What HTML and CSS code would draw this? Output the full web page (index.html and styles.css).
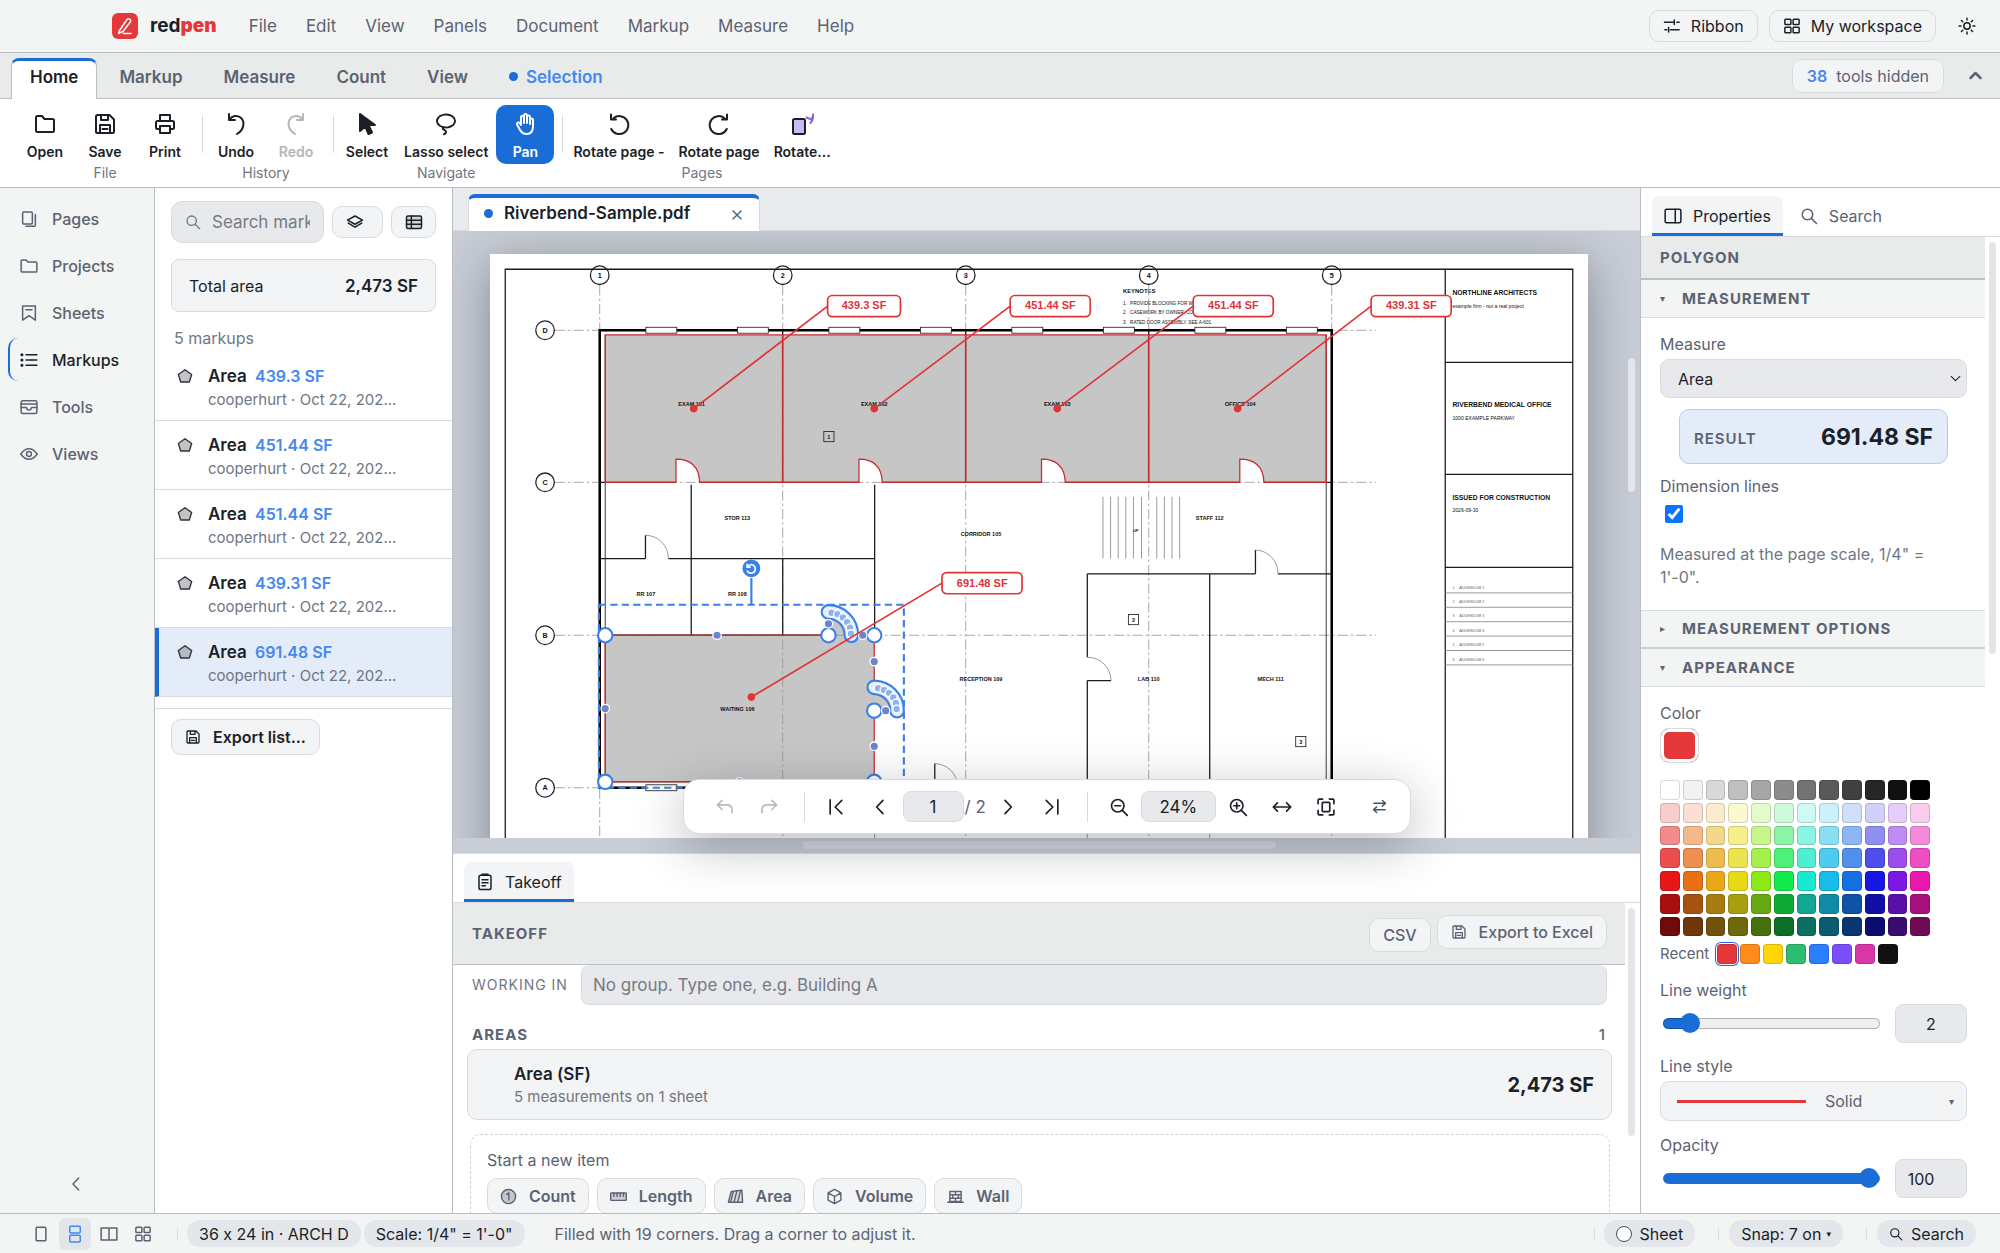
FILE: index.html
```html
<!DOCTYPE html>
<html lang="en">
<head>
<meta charset="utf-8">
<title>redpen</title>
<link rel="stylesheet" href="styles.css">
</head>
<body>
<svg class="sprite" aria-hidden="true">
  <symbol id="i-folder" viewBox="0 0 24 24"><path d="M3 19V5.5A1.5 1.5 0 0 1 4.500 4H9l2.500 3H19.500A1.500 1.500 0 0 1 21 8.500V18.500A1.500 1.500 0 0 1 19.500 20H4.500A1.500 1.500 0 0 1 3 18.500Z"/></symbol>
  <symbol id="i-save" viewBox="0 0 24 24"><path d="M4.500 3H16.500L21 7.500V19.500A1.500 1.500 0 0 1 19.500 21H4.500A1.500 1.500 0 0 1 3 19.500V4.500A1.500 1.500 0 0 1 4.500 3ZM7 21V13H17V21M8 3V8H15V3M9.500 17H14.500"/></symbol>
  <symbol id="i-print" viewBox="0 0 24 24"><path d="M7 9V3H17V9M7 17H4.500A1.500 1.500 0 0 1 3 15.500V10.500A1.500 1.500 0 0 1 4.500 9H19.500A1.500 1.500 0 0 1 21 10.500V15.500A1.500 1.500 0 0 1 19.500 17H17M7 14H17V21H7Z"/></symbol>
  <symbol id="i-undo" viewBox="0 0 24 24"><path d="M5 2V8H11M5 8C8 3.500 13 2.800 16.500 5.500C21.500 9.500 20 18 13 22"/></symbol>
  <symbol id="i-redo" viewBox="0 0 24 24"><path d="M19 2V8H13M19 8C16 3.500 11 2.800 7.500 5.500C2.500 9.500 4 18 11 22"/></symbol>
  <symbol id="i-cursor" viewBox="0 0 24 24"><path fill="currentColor" d="M5 2L20 13H13.500L17 20.500L13.500 22L10.300 14.600L5 19Z"/></symbol>
  <symbol id="i-lasso" viewBox="0 0 24 24"><ellipse cx="12" cy="9" rx="9" ry="6.500" stroke-dasharray="4.500 1.500"/><path d="M9 15.500C7.500 18 12.500 17.500 12 20C11.800 21.500 11 22 10 22.300"/></symbol>
  <symbol id="i-hand" viewBox="0 0 24 24"><path d="M8 12V5.200a1.500 1.500 0 0 1 3 0V11M11 10V3.500a1.500 1.500 0 0 1 3 0V11M14 10.500V5a1.500 1.500 0 0 1 3 0V12M17 12V8a1.500 1.500 0 0 1 3 0V14.500C20 19.500 17.500 22 13.500 22C9.500 22 8 20 6.500 17L4 12.500a1.600 1.600 0 0 1 2.800-1.400L8 13"/></symbol>
  <symbol id="i-ccw" viewBox="0 0 24 24"><path d="M4 2.500V7.500H9M6.500 6.200A9 9 0 1 1 4.200 17"/></symbol>
  <symbol id="i-cw" viewBox="0 0 24 24"><path d="M20 2.500V7.500H15M17.500 6.200A9 9 0 1 0 19.800 17"/></symbol>
  <symbol id="i-rotpage" viewBox="0 0 24 24"><rect x="3" y="7" width="12" height="15" rx="1.500" fill="#cbb8f5"/><path stroke="#8b5cf0" d="M23 2.500Q23.500 8 20.500 11M16.500 5.500L21.500 7.500L23.500 2.500"/></symbol>
  <symbol id="i-sliders" viewBox="0 0 24 24"><path d="M2 7H13M18.500 7H21.500M15 4V10M2.500 17H5M10 17H21.500M7.500 14V20" /></symbol>
  <symbol id="i-grid" viewBox="0 0 24 24"><rect x="2.500" y="3" width="8" height="7" rx="1"/><rect x="13.500" y="3" width="8" height="7" rx="1"/><rect x="2.500" y="13.500" width="8" height="7.500" rx="1"/><rect x="13.500" y="13.500" width="8" height="7.500" rx="1"/></symbol>
  <symbol id="i-sun" viewBox="0 0 24 24"><circle cx="12" cy="12" r="4.200"/><path d="M12 1.500V4M12 20V22.500M1.500 12H4M20 12H22.500M4.600 4.600L6.300 6.300M17.700 17.700L19.400 19.400M4.600 19.400L6.300 17.700M17.700 6.300L19.400 4.600"/></symbol>
  <symbol id="i-up" viewBox="0 0 24 24"><path d="M4 16L12 8L20 16"/></symbol>
  <symbol id="i-left" viewBox="0 0 24 24"><path d="M15.500 4L8 12L15.500 20"/></symbol>
  <symbol id="i-right" viewBox="0 0 24 24"><path d="M8.500 4L16 12L8.500 20"/></symbol>
  <symbol id="i-first" viewBox="0 0 24 24"><path d="M5 3.500V20.500M19 4L11 12L19 20"/></symbol>
  <symbol id="i-last" viewBox="0 0 24 24"><path d="M19 3.500V20.500M5 4L13 12L5 20"/></symbol>
  <symbol id="i-back" viewBox="0 0 24 24"><path d="M8.500 4L3 9.500L8.500 15M3 9.500H14.500C18.500 9.500 20.500 12 20.500 15.500V19"/></symbol>
  <symbol id="i-fwd" viewBox="0 0 24 24"><path d="M15.500 4L21 9.500L15.500 15M21 9.500H9.500C5.500 9.500 3.500 12 3.500 15.500V19"/></symbol>
  <symbol id="i-search" viewBox="0 0 24 24"><circle cx="10" cy="10" r="7"/><path d="M15.200 15.200L22 22"/></symbol>
  <symbol id="i-zout" viewBox="0 0 24 24"><circle cx="10.500" cy="10.500" r="7.500"/><path d="M16 16L22 22M7 10.500H14"/></symbol>
  <symbol id="i-zin" viewBox="0 0 24 24"><circle cx="10.500" cy="10.500" r="7.500"/><path d="M16 16L22 22M7 10.500H14M10.500 7V14"/></symbol>
  <symbol id="i-width" viewBox="0 0 24 24"><path d="M2 12H22M6.500 7L1.500 12L6.500 17M17.500 7L22.500 12L17.500 17"/></symbol>
  <symbol id="i-fit" viewBox="0 0 24 24"><path d="M2.500 8V4A1.500 1.500 0 0 1 4 2.500H8M16 2.500H20A1.500 1.500 0 0 1 21.500 4V8M21.500 16V20A1.500 1.500 0 0 1 20 21.500H16M8 21.500H4A1.500 1.500 0 0 1 2.500 20V16"/><rect x="7.500" y="6.500" width="9" height="11" rx="1"/></symbol>
  <symbol id="i-swap" viewBox="0 0 24 24"><path d="M4 7.500H20M16 3.500L20.500 7.500L16 11.500M20 16.500H4M8 12.500L3.500 16.500L8 20.500"/></symbol>
  <symbol id="i-pages" viewBox="0 0 24 24"><rect x="3.500" y="2.500" width="13" height="16" rx="1.500"/><path d="M20.500 6V20A1.500 1.500 0 0 1 19 21.500H8"/></symbol>
  <symbol id="i-dir" viewBox="0 0 24 24"><path d="M1.500 18.500V5.500A1.500 1.500 0 0 1 3 4H8L10.500 6.500H21A1.500 1.500 0 0 1 22.500 8V18.500A1.500 1.500 0 0 1 21 20H3A1.500 1.500 0 0 1 1.500 18.500Z"/></symbol>
  <symbol id="i-sheets" viewBox="0 0 24 24"><path d="M3.500 2.500H20.500V21.500L12 15.500L3.500 21.500ZM8 7.500H16"/></symbol>
  <symbol id="i-list" viewBox="0 0 24 24"><path d="M8 5H22.500M8 12H22.500M8 19H22.500"/><path stroke-width="4" stroke-linecap="round" d="M2.500 5H2.600M2.500 12H2.600M2.500 19H2.600"/></symbol>
  <symbol id="i-tools" viewBox="0 0 24 24"><rect x="1.500" y="3.500" width="21" height="17" rx="2"/><path d="M1.500 8H22.500M1.500 12.500H8.500Q9 16 12 16T15.500 12.500H22.500"/></symbol>
  <symbol id="i-eye" viewBox="0 0 24 24"><path d="M1 12Q6 5 12 5T23 12Q18 19 12 19T1 12Z"/><circle cx="12" cy="12" r="3.200"/></symbol>
  <symbol id="i-layers" viewBox="0 0 24 24"><path d="M12 4L22 9.500L12 15L2 9.500ZM3 13.500L12 18.800L21 13.500"/></symbol>
  <symbol id="i-table" viewBox="0 0 24 24"><rect x="2" y="4" width="20" height="16.500" rx="2" fill="currentColor" fill-opacity=".15"/><path d="M2 9.500H22M2 15H22M8.500 4V20.500"/></symbol>
  <symbol id="i-poly" viewBox="0 0 24 24"><path fill="#828892" fill-opacity=".5" d="M12 2.500L22 9.700L18.500 21H5.500L2 9.700Z"/></symbol>
  <symbol id="i-panel" viewBox="0 0 24 24"><rect x="1.500" y="3" width="21" height="18" rx="2"/><path d="M15 3V21"/></symbol>
  <symbol id="i-clip" viewBox="0 0 24 24"><rect x="4" y="3" width="16" height="19" rx="2.500"/><path d="M8 1.800H16M8 9H16M8 13H16M8 17H12.500"/></symbol>
  <symbol id="i-count" viewBox="0 0 24 24"><circle cx="12" cy="12" r="10" fill="currentColor" fill-opacity=".3"/><path d="M9.500 9L12.500 7V17"/></symbol>
  <symbol id="i-ruler" viewBox="0 0 24 24"><rect x="1" y="7" width="22" height="10.500" rx="1" fill="currentColor" fill-opacity=".25"/><path d="M5.500 7V12M10 7V12M14.500 7V12M19 7V12"/></symbol>
  <symbol id="i-area" viewBox="0 0 24 24"><path fill="currentColor" fill-opacity=".15" d="M6 5L21 3L22 20H2ZM9 5L5 20M14 4L10 20M19 4L15 20"/></symbol>
  <symbol id="i-cube" viewBox="0 0 24 24"><path d="M12 2L21 7V17L12 22L3 17V7ZM3 7L12 12L21 7M12 12V22"/></symbol>
  <symbol id="i-wall" viewBox="0 0 24 24"><path d="M4 5H20V19H4ZM1 20H23M4 9.500H20M4 14.500H20M12 5V9.500M8 9.500V14.500M16 9.500V14.500M12 14.500V19"/></symbol>
  <symbol id="i-v1" viewBox="0 0 24 24"><rect x="5.500" y="3" width="13" height="18" rx="1.500"/></symbol>
  <symbol id="i-v2" viewBox="0 0 24 24"><rect x="5" y="1.500" width="14" height="9" rx="1.500"/><rect x="5" y="13.500" width="14" height="9" rx="1.500"/></symbol>
  <symbol id="i-v3" viewBox="0 0 24 24"><path d="M1.500 4H10.500A1.500 1.500 0 0 1 12 5.500A1.500 1.500 0 0 1 13.500 4H22.500V20H1.500ZM12 5.500V20"/></symbol>
</svg>

<header class="titlebar">
  <a class="brand" href="#"><svg class="logo" viewBox="0 0 26 26"><rect width="26" height="26" rx="6" fill="#e5383b"/><path d="M7.500 17.500L15 6.500Q16.500 5 18 6.300Q19.300 7.500 18.300 9L11 18.500L6.500 20.500ZM11.500 20.500H19" fill="none" stroke="#fff" stroke-width="1.500" stroke-linejoin="round" stroke-linecap="round"/></svg><span>red<b>pen</b></span></a>
  <nav class="menu">
    <a href="#">File</a><a href="#">Edit</a><a href="#">View</a><a href="#">Panels</a><a href="#">Document</a><a href="#">Markup</a><a href="#">Measure</a><a href="#">Help</a>
  </nav>
  <div class="title-actions">
    <button class="chip"><svg class="ic"><use href="#i-sliders"/></svg>Ribbon</button>
    <button class="chip"><svg class="ic"><use href="#i-grid"/></svg>My workspace</button>
    <button class="plain" aria-label="Theme"><svg class="ic"><use href="#i-sun"/></svg></button>
  </div>
</header>

<nav class="tabs">
  <button class="tab active">Home</button><button class="tab">Markup</button><button class="tab">Measure</button><button class="tab">Count</button><button class="tab">View</button><button class="tab context"><i class="dot"></i>Selection</button>
  <div class="tabs-end">
    <button class="chip hidden-tools"><b>38</b> tools hidden</button>
    <button class="plain muted" aria-label="Collapse ribbon"><svg class="ic thick"><use href="#i-up"/></svg></button>
  </div>
</nav>

<section class="ribbon">
  <div class="group"><div class="tools">
    <button><svg class="ic"><use href="#i-folder"/></svg>Open</button>
    <button><svg class="ic"><use href="#i-save"/></svg>Save</button>
    <button><svg class="ic"><use href="#i-print"/></svg>Print</button></div><span>File</span></div>
  <i class="rule"></i>
  <div class="group"><div class="tools">
    <button><svg class="ic"><use href="#i-undo"/></svg>Undo</button>
    <button disabled><svg class="ic"><use href="#i-redo"/></svg>Redo</button></div><span>History</span></div>
  <i class="rule"></i>
  <div class="group"><div class="tools">
    <button><svg class="ic"><use href="#i-cursor"/></svg>Select</button>
    <button><svg class="ic"><use href="#i-lasso"/></svg>Lasso select</button>
    <button class="on"><svg class="ic"><use href="#i-hand"/></svg>Pan</button></div><span>Navigate</span></div>
  <i class="rule"></i>
  <div class="group"><div class="tools">
    <button><svg class="ic"><use href="#i-ccw"/></svg>Rotate page -</button>
    <button><svg class="ic"><use href="#i-cw"/></svg>Rotate page</button>
    <button><svg class="ic"><use href="#i-rotpage"/></svg>Rotate...</button></div><span>Pages</span></div>
</section>

<main class="work">
  <nav class="rail">
    <a href="#"><svg class="ic"><use href="#i-pages"/></svg>Pages</a>
    <a href="#"><svg class="ic"><use href="#i-dir"/></svg>Projects</a>
    <a href="#"><svg class="ic"><use href="#i-sheets"/></svg>Sheets</a>
    <a href="#" class="active"><svg class="ic"><use href="#i-list"/></svg>Markups</a>
    <a href="#"><svg class="ic"><use href="#i-tools"/></svg>Tools</a>
    <a href="#"><svg class="ic"><use href="#i-eye"/></svg>Views</a>
    <button class="plain collapse" aria-label="Collapse"><svg class="ic"><use href="#i-left"/></svg></button>
  </nav>

  <aside class="markups">
    <div class="filter">
      <label class="searchbox"><svg class="ic"><use href="#i-search"/></svg><input type="text" placeholder="Search markups" aria-label="Search markups"></label>
      <button class="chip wide" aria-label="Layers"><svg class="ic"><use href="#i-layers"/></svg></button>
      <button class="chip" aria-label="Table"><svg class="ic"><use href="#i-table"/></svg></button>
    </div>
    <div class="total"><span>Total area</span><b>2,473 SF</b></div>
    <p class="count">5 markups</p>
    <ul class="items">
      <li><svg class="ic"><use href="#i-poly"/></svg><div><h3>Area <b>439.3 SF</b></h3><p>cooperhurt · Oct 22, 202...</p></div></li>
      <li><svg class="ic"><use href="#i-poly"/></svg><div><h3>Area <b>451.44 SF</b></h3><p>cooperhurt · Oct 22, 202...</p></div></li>
      <li><svg class="ic"><use href="#i-poly"/></svg><div><h3>Area <b>451.44 SF</b></h3><p>cooperhurt · Oct 22, 202...</p></div></li>
      <li><svg class="ic"><use href="#i-poly"/></svg><div><h3>Area <b>439.31 SF</b></h3><p>cooperhurt · Oct 22, 202...</p></div></li>
      <li class="selected"><svg class="ic"><use href="#i-poly"/></svg><div><h3>Area <b>691.48 SF</b></h3><p>cooperhurt · Oct 22, 202...</p></div></li>
    </ul>
    <div class="foot"><button class="chip"><svg class="ic"><use href="#i-save"/></svg>Export list...</button></div>
  </aside>

  <section class="center">
    <div class="docs"><div class="doc"><i class="dot"></i><span>Riverbend-Sample.pdf</span><button class="plain" aria-label="Close">×</button></div></div>

    <div class="canvas">
      <div class="view">
        <svg class="sheet" viewBox="0 0 2592 1728">
          <rect width="2592" height="1728" fill="#fff"/>
          <g class="line">
            <path class="w3" d="M36 36H2556V1692H36ZM2255 36V1692M2255 256H2556M2255 520H2556M2255 740H2556"/>
            <path class="faint" d="M2255 800H2556M2255 834H2556M2255 868H2556M2255 902H2556M2255 936H2556M2255 970H2556"/>
            <path class="faint" d="M908 1270V1500M1410 1270V1500M1699 1270V1500"/>
          </g>
          <g class="txt">
            <text class="t14b" x="1494" y="92">KEYNOTES</text>
            <text class="t11" x="1494" y="120">1.</text><text class="t11" x="1511" y="120">PROVIDE BLOCKING FOR WALLS.</text>
            <text class="t11" x="1494" y="142">2.</text><text class="t11" x="1511" y="142">CASEWORK BY OWNER. COORD.</text>
            <text class="t11" x="1494" y="165">3.</text><text class="t11" x="1511" y="165">RATED DOOR ASSEMBLY. SEE A-601.</text>
            <text class="t16b" x="2272" y="97">NORTHLINE ARCHITECTS</text><text class="t12" x="2272" y="127">example firm - not a real project</text>
            <text class="t16b" x="2272" y="361">RIVERBEND MEDICAL OFFICE</text><text class="t12" x="2272" y="391">1000 EXAMPLE PARKWAY</text>
            <text class="t16b" x="2272" y="581">ISSUED FOR CONSTRUCTION</text><text class="t12" x="2272" y="610">2026-09-30</text>
          </g>
          <g class="txt add">
            <text x="2272" y="790">1</text><text x="2288" y="790">ADDENDUM 1</text>
            <text x="2272" y="824">2</text><text x="2288" y="824">ADDENDUM 2</text>
            <text x="2272" y="858">3</text><text x="2288" y="858">ADDENDUM 3</text>
            <text x="2272" y="892">4</text><text x="2288" y="892">ADDENDUM 4</text>
            <text x="2272" y="926">5</text><text x="2288" y="926">ADDENDUM 5</text>
            <text x="2272" y="960">6</text><text x="2288" y="960">ADDENDUM 6</text>
          </g>
          <!-- area fills -->
          <g fill="#c6c6c6">
            <path d="M272 191H1974V539H1827Q1825 484 1770 484V539H1358Q1356 484 1302 484V539H926Q924 484 871 484V539H495Q493 484 439 484V539H272Z"/>
            <path d="M272 900H799V845A54 54 0 0 1 853 900H907V1023A55 55 0 0 1 961 1078H907V1246H272Z"/>
          </g>
          <!-- column grid -->
          <g class="gridline"><path d="M259 74V1500M691 74V1500M1123 74V1500M1555 74V1500M1987 74V1500M153 180H2091M153 539H2091M153 900H2091M153 1260H2091"/></g>
          <g class="bubble"><circle cx="259" cy="50" r="22"/><circle cx="691" cy="50" r="22"/><circle cx="1123" cy="50" r="22"/><circle cx="1555" cy="50" r="22"/><circle cx="1987" cy="50" r="22"/><circle cx="130" cy="180" r="22"/><circle cx="130" cy="539" r="22"/><circle cx="130" cy="900" r="22"/><circle cx="130" cy="1260" r="22"/></g>
          <g class="txt mid b18"><text x="259" y="56">1</text><text x="691" y="56">2</text><text x="1123" y="56">3</text><text x="1555" y="56">4</text><text x="1987" y="56">5</text><text x="130" y="186">D</text><text x="130" y="545">C</text><text x="130" y="906">B</text><text x="130" y="1266">A</text></g>
          <!-- walls -->
          <g class="line">
            <rect class="w6" x="259" y="180" width="1728" height="1080"/>
            <path d="M272 191V1246H1974V191"/>
            <path class="w3" d="M259 539H439M495 539H871M926 539H1302M1358 539H1770M1827 539H1987M691 180V191M1123 180V191M1555 180V191M475 545V900M908 545V900M259 719H367M421 719H908M691 719V900M259 900H799M853 900H908M1410 755V952M1410 1007V1260M1410 755H1807M1860 755H1987M1699 755V1260"/>
            <path class="w3" d="M367 719V664M1807 755V699M1410 1007H1466M1050 1260V1203"/>
            <path class="faint" d="M367 664A54 54 0 0 1 421 719M1807 699A54 54 0 0 1 1860 755M1410 952A55 55 0 0 1 1466 1007M1050 1203A55 55 0 0 1 1104 1260"/>
            <path class="faint" d="M1447 573V719M1465 573V719M1483 573V719M1501 573V719M1519 573V719M1538 573V719M1574 573V719M1592 573V719M1610 573V719M1628 573V719"/>
          </g>
          <g class="window"><rect x="368" y="173" width="73" height="14"/><rect x="584" y="173" width="73" height="14"/><rect x="800" y="173" width="73" height="14"/><rect x="1016" y="173" width="73" height="14"/><rect x="1232" y="173" width="73" height="14"/><rect x="1448" y="173" width="73" height="14"/><rect x="1664" y="173" width="73" height="14"/><rect x="1880" y="173" width="73" height="14"/><rect x="368" y="1253" width="73" height="14"/></g>
          <g class="window tag"><rect x="788" y="419" width="24" height="24"/><rect x="1507" y="851" width="24" height="24"/><rect x="1902" y="1139" width="24" height="24"/></g>
          <g class="txt mid b13">
            <text x="476" y="358">EXAM 101</text><text x="907" y="358">EXAM 102</text><text x="1339" y="358">EXAM 103</text><text x="1771" y="358">OFFICE 104</text>
            <text x="584" y="629">STOR 113</text><text x="1159" y="665">CORRIDOR 105</text><text x="1699" y="629">STAFF 112</text>
            <text x="368" y="808">RR 107</text><text x="584" y="808">RR 108</text><text x="584" y="1079">WAITING 106</text>
            <text x="1159" y="1007">RECEPTION 109</text><text x="1555" y="1007">LAB 110</text><text x="1843" y="1007">MECH 111</text>
            <text x="800" y="436">1</text><text x="1519" y="868">2</text><text x="1914" y="1156">3</text><text class="t9" x="1525" y="656">UP</text>
          </g>
          <!-- measured area outlines -->
          <g class="red">
            <path d="M272 191H1974V539H1827Q1825 484 1770 484V539H1358Q1356 484 1302 484V539H926Q924 484 871 484V539H495Q493 484 439 484V539H272Z"/>
            <path class="w4" d="M691 191V539M1123 191V539M1555 191V539"/>
            <path d="M272 900H799V845A54 54 0 0 1 853 900H907V1023A55 55 0 0 1 961 1078H907V1246H272Z"/>
          </g>
          <!-- selection -->
          <rect class="marquee" x="257" y="828" width="720" height="432"/>
          <path class="stem" d="M617 765V828"/>
          <circle cx="617" cy="742" r="21" fill="#3b7fe8"/>
          <path d="M607 731V739H615M608 738A10 10 0 1 1 607 747" fill="none" stroke="#fff" stroke-width="4"/>
          <g class="chain-out"><path d="M799 845A54 54 0 0 1 853 900M907 1023A55 55 0 0 1 961 1078"/></g>
          <g class="chain-in"><path d="M799 845A54 54 0 0 1 853 900M907 1023A55 55 0 0 1 961 1078"/></g>
          <g class="handle"><circle cx="272" cy="900" r="17"/><circle cx="799" cy="900" r="17"/><circle cx="907" cy="900" r="17"/><circle cx="272" cy="1246" r="17"/><circle cx="907" cy="1246" r="17"/><circle cx="907" cy="1078" r="17"/></g>
          <g class="node"><circle cx="536" cy="900" r="10"/><circle cx="799" cy="873" r="10"/><circle cx="880" cy="900" r="10"/><circle cx="907" cy="962" r="10"/><circle cx="934" cy="1078" r="10"/><circle cx="907" cy="1162" r="10"/><circle cx="272" cy="1073" r="10"/><circle cx="589" cy="1246" r="10"/></g>
          <g class="node light"><circle cx="806" cy="847" r="9"/><circle cx="820" cy="850" r="9"/><circle cx="833" cy="858" r="9"/><circle cx="843" cy="869" r="9"/><circle cx="850" cy="882" r="9"/><circle cx="852" cy="896" r="9"/><circle cx="916" cy="1025" r="9"/><circle cx="930" cy="1029" r="9"/><circle cx="942" cy="1036" r="9"/><circle cx="952" cy="1047" r="9"/><circle cx="958" cy="1060" r="9"/><circle cx="960" cy="1074" r="9"/></g>
          <!-- callouts -->
          <g class="leader"><path d="M797 123L481 365M1228 123L907 365M1660 123L1339 365M2080 123L1765 365M1067 777L617 1046"/></g>
          <g fill="#e03439"><circle cx="481" cy="365" r="9"/><circle cx="907" cy="365" r="9"/><circle cx="1339" cy="365" r="9"/><circle cx="1765" cy="365" r="9"/><circle cx="617" cy="1046" r="9"/></g>
          <g class="callout"><rect x="797" y="98" width="172" height="50" rx="11"/><rect x="1228" y="98" width="189" height="50" rx="11"/><rect x="1660" y="98" width="189" height="50" rx="11"/><rect x="2080" y="98" width="189" height="50" rx="11"/><rect x="1067" y="752" width="189" height="50" rx="11"/></g>
          <g class="txt mid note"><text x="883" y="131">439.3 SF</text><text x="1323" y="131">451.44 SF</text><text x="1755" y="131">451.44 SF</text><text x="2175" y="131">439.31 SF</text><text x="1162" y="785">691.48 SF</text></g>
        </svg>
      </div>
      <i class="thumb v"></i><i class="thumb h"></i>
      <div class="pagebar">
        <button class="plain off" aria-label="Back"><svg class="ic"><use href="#i-back"/></svg></button>
        <button class="plain off" aria-label="Forward"><svg class="ic"><use href="#i-fwd"/></svg></button>
        <i class="rule"></i>
        <button class="plain" aria-label="First page"><svg class="ic"><use href="#i-first"/></svg></button>
        <button class="plain" aria-label="Previous page"><svg class="ic"><use href="#i-left"/></svg></button>
        <input class="page" type="text" value="1" aria-label="Page"><span class="of">/ 2</span>
        <button class="plain" aria-label="Next page"><svg class="ic"><use href="#i-right"/></svg></button>
        <button class="plain" aria-label="Last page"><svg class="ic"><use href="#i-last"/></svg></button>
        <i class="rule"></i>
        <button class="plain" aria-label="Zoom out"><svg class="ic"><use href="#i-zout"/></svg></button>
        <button class="zoom">24%</button>
        <button class="plain" aria-label="Zoom in"><svg class="ic"><use href="#i-zin"/></svg></button>
        <button class="plain" aria-label="Fit width"><svg class="ic"><use href="#i-width"/></svg></button>
        <button class="plain" aria-label="Fit page"><svg class="ic"><use href="#i-fit"/></svg></button>
        <button class="plain swap" aria-label="Swap side"><svg class="ic small"><use href="#i-swap"/></svg></button>
      </div>
    </div>

    <section class="takeoff">
      <div class="ptabs"><button class="ptab active"><svg class="ic"><use href="#i-clip"/></svg>Takeoff</button></div>
      <div class="takebody">
        <i class="thumb t"></i>
        <div class="takehead"><h2>TAKEOFF</h2><button class="chip csv">CSV</button><button class="chip excel"><svg class="ic"><use href="#i-save"/></svg>Export to Excel</button></div>
        <div class="working"><label for="grp">WORKING IN</label><input id="grp" type="text" placeholder="No group. Type one, e.g. Building A"></div>
        <div class="areas"><span>AREAS</span><b>1</b></div>
        <div class="card"><div><h3>Area (SF)</h3><p>5 measurements on 1 sheet</p></div><b>2,473 SF</b></div>
        <div class="start"><p>Start a new item</p><div>
          <button class="chip"><svg class="ic"><use href="#i-count"/></svg>Count</button><button class="chip"><svg class="ic"><use href="#i-ruler"/></svg>Length</button><button class="chip"><svg class="ic"><use href="#i-area"/></svg>Area</button><button class="chip"><svg class="ic"><use href="#i-cube"/></svg>Volume</button><button class="chip"><svg class="ic"><use href="#i-wall"/></svg>Wall</button></div></div>
      </div>
    </section>
  </section>

  <aside class="props">
    <div class="ptabs"><button class="ptab active"><svg class="ic"><use href="#i-panel"/></svg>Properties</button><button class="ptab"><svg class="ic"><use href="#i-search"/></svg>Search</button></div>
    <div class="propbody">
      <i class="thumb p"></i>
      <h2 class="sec top">POLYGON</h2>
      <h2 class="sec"><i>▾</i>MEASUREMENT</h2>
      <div class="fields first">
        <label for="measure">Measure</label>
        <div class="selectwrap"><select id="measure"><option>Area</option></select><svg class="ic"><use href="#i-up"/></svg></div>
        <div class="result"><span>RESULT</span><b>691.48 SF</b></div>
        <label for="dim">Dimension lines</label>
        <input id="dim" type="checkbox" checked>
        <p>Measured at the page scale, 1/4" = 1'-0".</p>
      </div>
      <h2 class="sec line-top"><i>▸</i>MEASUREMENT OPTIONS</h2>
      <h2 class="sec"><i>▾</i>APPEARANCE</h2>
      <div class="fields">
        <label for="color">Color</label>
        <button id="color" class="current" aria-label="Current color"></button>
        <div class="palette" id="palette"></div>
        <div class="recent"><span>Recent</span><div id="recent"></div></div>
        <label for="weight">Line weight</label>
        <div class="slide"><input id="weight" type="range" min="0" max="100" value="8" style="--fill:12%"><input class="num" type="text" value="2" aria-label="Line weight value"></div>
        <label for="lstyle">Line style</label>
        <button id="lstyle" class="linestyle"><i></i><span>Solid</span><em>▾</em></button>
        <label for="opacity">Opacity</label>
        <div class="slide"><input id="opacity" type="range" min="0" max="100" value="100" style="--fill:100%"><input class="num full" type="text" value="100" aria-label="Opacity value"></div>
      </div>
    </div>
  </aside>
</main>

<footer class="status">
  <div class="views"><button class="plain" aria-label="Single page"><svg class="ic"><use href="#i-v1"/></svg></button><button class="plain on" aria-label="Continuous"><svg class="ic"><use href="#i-v2"/></svg></button><button class="plain" aria-label="Two pages"><svg class="ic"><use href="#i-v3"/></svg></button><button class="plain" aria-label="Grid"><svg class="ic"><use href="#i-grid"/></svg></button></div>
  <i class="rule"></i>
  <button class="pill">36 x 24 in · ARCH D</button><button class="pill">Scale: 1/4" = 1'-0"</button>
  <span class="msg">Filled with 19 corners. Drag a corner to adjust it.</span>
  <i class="rule"></i><button class="pill"><i class="ring"></i>Sheet</button>
  <i class="rule gap"></i><button class="pill">Snap: 7 on <small>▾</small></button>
  <i class="rule gap"></i><button class="pill"><svg class="ic"><use href="#i-search"/></svg>Search</button>
</footer>
<script src="palette.js"></script>
</body>
</html>
```

FILE: palette.js
```js
const colors = [
  'ffffff f2f2f2 d9d9d9 bfbfbf a6a6a6 8c8c8c 737373 595959 404040 262626 111111 000000',
  'facdcd fae0d0 fbeccd fbf9d0 e4facb cdfad9 cdfaf2 cdf1fa cddffa d0d0fa e6cdfa facdee',
  'f28b8b f4b98b f4d78b f6f08b c6f68b 8bf5a5 8bf5e3 8bdff5 8bb5f5 8e8ef3 c08bf3 f38bd9',
  'ea4e4e ed8f4e edbc4e ece44e a6f04e 4ef07a 4eeed2 4eccee 4e90ea 4e4eea 9c4eea ee4ec4',
  'e81717 e87017 e8a817 e8da17 8bea17 12ea4c 17ead0 17bcea 1770e3 1717e3 7d17e3 ea17b1',
  'a81010 a85210 a87c10 a89e10 68a810 10a837 10a892 108ba8 1052a8 1010a8 5a10a8 a8107f',
  '700b0b 70370b 70530b 70690b 45700b 0b7025 0b7061 0b5c70 0b3770 0b0b70 3c0b70 700b55'
];
const recent = 'e5383b ff8c1a ffd60a 2dbd6e 2a7fff 7c4dff d936a8 111111';
function fill(id, list) {
  const host = document.getElementById(id);
  list.split(' ').forEach(c => {
    const b = document.createElement('button');
    b.className = 'swatch';
    b.style.background = '#' + c;
    b.setAttribute('aria-label', '#' + c);
    host.appendChild(b);
  });
}
fill('palette', colors.join(' '));
fill('recent', recent);
```

FILE: styles.css
```css
* { box-sizing: border-box; }
:root {
  --ink: #1b1f27; --muted: #5b6372; --soft: #6f7683;
  --edge: #babfc5; --hair: #d9dcdf; --blue: #1a6dd6; --link: #4488f0;
  --field: #e8e9ec; --btn: #f3f4f6;
}
body {
  margin: 0; height: 100vh; overflow: hidden; display: flex; flex-direction: column;
  font: 16px/20px Inter, "Liberation Sans", sans-serif; color: var(--ink); background: #fff;
  font-feature-settings: "calt" 0;
}
button, input, select { font: inherit; font-feature-settings: inherit; color: inherit; margin: 0; }
h2, h3, p, ul { margin: 0; padding: 0; font-size: inherit; list-style: none; }
a { color: inherit; text-decoration: none; }
.sprite { position: absolute; width: 0; height: 0; }
.ic { width: 18px; height: 18px; flex: none; fill: none; stroke: currentColor; stroke-width: 2; stroke-linecap: round; stroke-linejoin: round; }
.plain { border: 0; background: none; padding: 0; display: inline-flex; align-items: center; justify-content: center; }
.chip { display: inline-flex; align-items: center; justify-content: center; gap: 12px; height: 32px; padding: 0 15px; border: 1px solid var(--hair); border-radius: 10px; background: var(--btn); white-space: nowrap; }
.dot { width: 9px; height: 9px; border-radius: 50%; background: var(--blue); flex: none; }
.rule { width: 1px; background: var(--hair); flex: none; }

.titlebar { display: flex; align-items: center; height: 53px; padding: 0 13px 0 112px; background: #f3f4f4; border-bottom: 1px solid var(--edge); flex: none; }
.brand { display: flex; align-items: center; gap: 12px; font-size: 19px; font-weight: 700; }
.brand b { color: #e5383b; }
.logo { width: 26px; height: 26px; }
.menu { display: flex; gap: 29px; margin-left: 32px; color: var(--muted); font-size: 17px; }
.title-actions { margin-left: auto; display: flex; align-items: center; gap: 11px; }
.title-actions .plain { width: 40px; }
.title-actions .chip { padding: 0 13px; gap: 10px; }

.tabs { display: flex; align-items: flex-end; gap: 3px; height: 46px; padding: 0 5px 0 11px; background: #e9ebeb; border-bottom: 1px solid var(--edge); flex: none; }
.tab { height: 41px; margin-bottom: -1px; padding: 0 18px 7px; border: 1px solid transparent; border-top-width: 3px; border-bottom: 0; background: none; font-size: 17px; font-weight: 600; color: var(--muted); display: flex; align-items: center; gap: 8px; }
.tab.active { background: #fff; color: var(--ink); border-color: var(--edge); border-top-color: var(--blue); border-radius: 8px 8px 0 0; }
.tab.context { color: var(--link); }
.tabs-end { margin-left: auto; align-self: center; display: flex; gap: 11px; }
.hidden-tools { gap: 9px; padding: 0 14px; height: 34px; color: var(--muted); }
.hidden-tools b { color: var(--link); font-weight: 600; }
.tabs-end .plain { width: 40px; color: var(--muted); }
.thick { stroke-width: 4; width: 15px; height: 15px; }

.ribbon { display: flex; align-items: flex-start; height: 89px; padding: 6px 16px 0; border-bottom: 1px solid var(--edge); flex: none; }
.group { display: flex; flex-direction: column; align-items: center; font-size: 14px; line-height: 18px; color: var(--soft); }
.tools { display: flex; gap: 2px; }
.tools button { min-width: 58px; height: 59px; padding: 7px 6px 0; border: 0; border-radius: 10px; background: none; color: var(--ink); font-size: 14px; font-weight: 600; display: flex; flex-direction: column; align-items: center; gap: 7px; white-space: nowrap; }
.tools .ic { width: 24px; height: 24px; }
.tools .on { background: var(--blue); color: #fff; }
.tools button:disabled { color: #b3b5b9; }
.ribbon .rule { height: 38px; margin: 10px 4px 0 8px; }

.work { flex: 1; min-height: 0; display: grid; grid-template-columns: 155px 298px minmax(0, 1fr) 360px; grid-template-rows: minmax(0, 1fr); }
.rail { background: #f3f4f4; border-right: 1px solid var(--edge); padding: 9px 8px 16px; display: flex; flex-direction: column; gap: 4px; color: var(--muted); font-weight: 500; }
.rail a { display: flex; align-items: center; gap: 14px; height: 43px; padding-left: 10px; border-left: 2px solid transparent; border-radius: 10px; font-size: 16px; }
.rail .active { color: var(--ink); border-left-color: var(--blue); }
.collapse { margin: auto auto 4px 59px; }

.markups { border-right: 1px solid var(--edge); overflow: hidden; }
.filter { display: flex; align-items: center; gap: 8px; padding: 13px 16px 0; }
.searchbox { flex: 1; min-width: 0; height: 42px; display: flex; align-items: center; gap: 11px; padding: 0 13px; border: 1px solid var(--hair); border-radius: 11px; background: var(--field); color: var(--soft); }
.searchbox .ic, .foot .ic, .excel .ic { width: 16px; height: 16px; }
.searchbox input { min-width: 0; width: 100%; border: 0; padding: 0; background: none; font-size: 17px; }
::placeholder { color: #767a82; opacity: 1; }
.filter .chip { width: 45px; padding: 0; }
.filter .chip.wide { width: 51px; padding-right: 6px; }
.total { display: flex; justify-content: space-between; align-items: center; height: 53px; margin: 16px 16px 0; padding: 0 17px; border: 1px solid var(--hair); border-radius: 8px; background: var(--btn); }
.total b { font-weight: 600; font-size: 17px; }
.count { padding: 16px 19px 4px; color: var(--soft); }
.items li { display: flex; gap: 15px; height: 69px; padding: 12px 0 0 22px; border-bottom: 1px solid var(--hair); }
.items { display: flex; flex-direction: column; padding-bottom: 11px; border-bottom: 1px solid var(--hair); }
.items .ic { width: 16px; height: 16px; margin-top: 4px; stroke: #333; }
.items h3 { font-size: 17px; line-height: 24px; font-weight: 600; }
.items h3 b { font-weight: 600; color: var(--link); margin-left: 4px; font-size: 16px; }
.items p { font-size: 15px; line-height: 24px; color: var(--soft); }
.items .selected { background: #e4ebf9; border-left: 4px solid var(--blue); padding-left: 18px; }
.foot { padding: 10px 16px; }
.foot .chip { height: 36px; font-weight: 600; padding: 0 13px; }

.center { min-width: 0; min-height: 0; display: flex; flex-direction: column; }
.docs { height: 43px; padding: 6px 15px 0; background: #e8eaed; flex: none; border-bottom: 1px solid var(--hair); }
.doc { display: flex; align-items: center; width: 292px; height: 37px; padding: 0 15px 3px; border: 1px solid var(--hair); border-top: 4px solid var(--blue); border-bottom: 0; border-radius: 7px 7px 0 0; background: #fff; font-size: 17px; font-weight: 600; gap: 11px; }
.doc .plain { margin-left: auto; font-weight: 300; font-size: 22px; color: var(--muted); }
.canvas { flex: 1; min-height: 0; position: relative; z-index: 1; background: #c8cdd6; padding-bottom: 15px; border-bottom: 1px solid var(--hair); }
.view { height: 100%; overflow: hidden; padding: 23px 52px 0 37px; }
.sheet { display: block; width: 100%; height: auto; box-shadow: 0 10px 45px rgba(30, 40, 50, .4); }
.thumb { position: absolute; border-radius: 4px; background: #e3e5e9; width: 7px; }
.thumb.v { right: 5px; top: 127px; height: 134px; }
.thumb.h { left: 350px; bottom: 4px; width: 473px; height: 8px; background: #d7dae1; }
.thumb.t { right: 5px; top: 5px; height: 228px; }
.thumb.p { right: 4px; top: 5px; height: 412px; }
.pagebar { position: absolute; left: 50%; bottom: 19px; transform: translateX(-50%); display: flex; align-items: center; height: 55px; width: 728px; padding: 0 8px 0 19px; border: 1px solid var(--hair); border-radius: 16px; background: #fff; box-shadow: 0 12px 50px rgba(20, 30, 40, .3); font-size: 17px; }
.pagebar .plain { width: 44px; }
.pagebar .off { color: #b7babf; }
.pagebar .ic { width: 20px; height: 20px; }
.pagebar .ic.small { width: 17px; height: 17px; }
.pagebar .swap { margin-left: auto; color: #41556b; }
.pagebar .rule { height: 30px; margin: 0 9px 0 13px; }
.page { width: 61px; height: 31px; margin-left: 1px; border: 1px solid var(--hair); border-radius: 8px; background: var(--field); text-align: center; padding: 0; }
.of { margin-left: 1px; color: var(--muted); white-space: nowrap; }
.zoom { width: 75px; height: 31px; border: 1px solid var(--hair); border-radius: 8px; background: var(--field); padding: 0; }

.txt text { font-family: "Liberation Sans", Arial, sans-serif; fill: #111; font-size: 11px; }
.txt .t14b { font-size: 14px; font-weight: 700; }
.txt .t16b { font-size: 16px; font-weight: 700; }
.txt .t12 { font-size: 12px; }
.add text { font-size: 9px; fill: #666; }
.mid { text-anchor: middle; }
.b18 text { font-size: 17px; font-weight: 700; }
.b13 text { font-size: 13px; font-weight: 700; }
.b13 .t9 { font-size: 9px; }
.note text { font-size: 26px; font-weight: 700; fill: #e03439; }
.line { fill: none; stroke: #1a1a1a; stroke-width: 2; }
.w3 { stroke-width: 3; }
.w4 { stroke-width: 4; }
.w6 { stroke-width: 6; stroke: #000; }
.faint { stroke: #888; stroke-width: 2; }
.gridline { fill: none; stroke: #999; stroke-width: 2; stroke-dasharray: 24 7 6 7; }
.bubble { fill: #fff; stroke: #222; stroke-width: 3; fill-opacity: 0; }
.window { fill: #fff; stroke: #222; stroke-width: 2; }
.tag { fill: none; }
.red { fill: none; stroke: #c82b30; stroke-width: 3; }
.marquee { fill: none; stroke: #3b7fe8; stroke-width: 5; stroke-dasharray: 17 10; }
.stem { stroke: #3b7fe8; stroke-width: 5; }
.chain-out { fill: none; stroke: #3b7fe8; stroke-width: 37; stroke-linecap: round; }
.chain-in { fill: none; stroke: #e6effc; stroke-width: 27; stroke-linecap: round; }
.handle { fill: #fff; stroke: #3b7fe8; stroke-width: 5; }
.node { fill: #6f82cc; stroke: #fff; stroke-width: 3; }
.light { fill: #8fb2ef; }
.leader { fill: none; stroke: #e03439; stroke-width: 4; }
.callout { fill: #fff; stroke: #e03439; stroke-width: 4; }

.takeoff { height: 359px; flex: none; display: flex; flex-direction: column; }
.ptabs { display: flex; height: 49px; align-items: flex-end; padding: 0 11px; border-bottom: 1px solid var(--hair); flex: none; }
.ptab { display: flex; align-items: center; gap: 11px; height: 40px; padding: 2px 12px 0; border: 0; border-bottom: 3px solid transparent; background: none; color: var(--muted); }
.ptab.active { background: var(--btn); border-bottom-color: var(--blue); border-radius: 8px 8px 0 0; color: var(--ink); }
.ptab + .ptab { padding-left: 17px; }
.takebody { flex: 1; min-height: 0; overflow: hidden; position: relative; padding-right: 15px; }
.takehead { display: flex; height: 62px; padding: 0 18px 0 19px; background: #e9ebeb; border-bottom: 1px solid var(--edge); color: var(--muted); }
.takehead h2 { flex: 1; align-self: center; font-size: 15px; letter-spacing: 1px; font-weight: 700; }
.takehead .chip { font-weight: 500; height: 34px; padding: 0 13px; margin-top: 12px; }
.takehead .csv { margin: 15px 6px 0 0; }
.working { display: flex; align-items: center; gap: 13px; padding: 0 18px 0 19px; color: var(--soft); }
.working label { font-size: 14px; letter-spacing: 1px; white-space: nowrap; }
.working input { flex: 1; height: 40px; padding: 0 11px; border: 1px solid var(--hair); border-top: 0; border-radius: 8px; background: var(--field); font-size: 17px; }
.areas { display: flex; justify-content: space-between; padding: 20px 20px 4px 19px; font-size: 15px; font-weight: 700; letter-spacing: 1px; color: var(--muted); }
.areas b { font-weight: 500; letter-spacing: 0; }
.card { display: flex; align-items: center; justify-content: space-between; height: 71px; margin: 0 13px 0 14px; padding: 0 17px 0 46px; border: 1px solid var(--hair); border-radius: 10px; background: var(--btn); }
.card h3 { font-size: 17px; line-height: 24px; font-weight: 600; }
.card p { font-size: 15px; line-height: 22px; color: var(--soft); }
.card > b { font-size: 20px; font-weight: 700; }
.start { margin: 14px 15px 0 17px; padding: 15px 16px; height: 110px; border: 1px dashed #cdd0d4; border-radius: 10px; color: var(--muted); }
.start div { display: flex; gap: 8px; margin-top: 8px; }
.start .chip { height: 36px; padding: 0 12px; font-weight: 600; }
.start .ic { width: 17px; height: 17px; }

.props { border-left: 1px solid var(--edge); display: flex; flex-direction: column; min-height: 0; }
.propbody { flex: 1; min-height: 0; overflow: hidden; position: relative; padding-right: 15px; }
.sec { display: flex; align-items: center; height: 38px; padding-left: 19px; font-size: 15px; font-weight: 700; letter-spacing: 1px; color: var(--muted); background: #f3f4f4; border-bottom: 1px solid var(--hair); }
.sec i { width: 22px; font-size: 10px; font-style: normal; letter-spacing: 0; font-family: "DejaVu Sans", sans-serif; }
.sec.top { height: 43px; background: #e9ebeb; border-bottom: 2px solid var(--edge); }
.sec.line-top { border-top: 1px solid var(--hair); height: 39px; border-bottom: 2px solid #cdd1d5; }
.fields { padding: 16px 18px 0 19px; display: flex; flex-direction: column; color: var(--muted); font-size: 16px; }
.fields.first { height: 292px; }
.selectwrap { position: relative; margin-top: 5px; }
.selectwrap select { appearance: none; width: 100%; height: 39px; padding: 0 17px; border: 1px solid var(--hair); border-radius: 9px; background: var(--field); color: var(--ink); }
.selectwrap .ic { position: absolute; right: 5px; top: 13px; width: 13px; height: 13px; color: #222; transform: rotate(180deg); }
.result { display: flex; align-items: center; justify-content: space-between; height: 55px; margin: 11px 19px 12px; padding: 0 14px; border: 1px solid #b3cbf0; border-radius: 10px; background: #e4ebf9; }
.result span { font-size: 15px; font-weight: 600; letter-spacing: 1px; padding-top: 5px; }
.result b { font-size: 23px; font-weight: 700; color: var(--ink); }
.fields input[type=checkbox] { width: 18px; height: 18px; margin: 9px 0 20px 5px; accent-color: #0a74ff; }
.fields p { line-height: 23px; color: var(--soft); }
.current { width: 39px; height: 35px; margin-top: 5px; padding: 0; border: 1px solid var(--hair); border-radius: 9px; background: #e5383b; box-shadow: inset 0 0 0 3px #fff; }
.palette { display: grid; grid-template-columns: repeat(12, 1fr); gap: 3px; width: 270px; margin-top: 17px; }
.swatch { aspect-ratio: 1; padding: 0; border: 1px solid rgba(0, 0, 0, .15); border-radius: 4px; }
.recent { display: flex; align-items: center; height: 20px; margin: 8px 0 16px; font-size: 15px; }
.recent span { width: 57px; }
.recent div { display: flex; gap: 3px; }
.recent .swatch { width: 20px; }
.recent .swatch:first-child { box-shadow: 0 0 0 1px #fff, 0 0 0 2px var(--blue); }
.slide { display: flex; align-items: center; gap: 15px; margin: 4px 0 13px; }
.slide input[type=range] { appearance: none; flex: 1; min-width: 0; height: 20px; background: none; margin-left: 3px; }
.slide input::-webkit-slider-runnable-track { height: 11px; border-radius: 6px; border: 1px solid rgba(0, 0, 0, .25); background: linear-gradient(to right, var(--blue) var(--fill), #efefef var(--fill)) border-box; }
#opacity::-webkit-slider-runnable-track { border-color: var(--blue); }
.slide input::-webkit-slider-thumb { appearance: none; width: 20px; height: 20px; margin-top: -6px; border-radius: 50%; background: var(--blue); }
.num { width: 72px; height: 39px; border: 1px solid var(--hair); border-radius: 8px; background: var(--field); color: var(--ink); text-align: center; padding: 0; }
.num.full { padding-right: 20px; }
.linestyle { display: flex; align-items: center; height: 40px; margin: 5px 0 14px; padding: 0 12px 0 16px; border: 1px solid var(--hair); border-radius: 9px; background: var(--btn); }
.linestyle i { width: 129px; height: 3px; background: #e5383b; margin-right: 19px; }
.linestyle em { margin-left: auto; font: 10px "DejaVu Sans", sans-serif; }

.status { height: 40px; flex: none; display: flex; align-items: center; padding: 0 24px 0 25px; background: #f3f4f4; border-top: 1px solid var(--edge); font-size: 16px; }
.views { display: flex; gap: 2px; color: var(--muted); }
.views .plain { width: 32px; height: 32px; border-radius: 6px; }
.views .on { background: #e2e5e9; color: var(--link); }
.status .rule { height: 12px; margin: 0 9px 0 18px; }
.status .rule.gap { margin: 0 10px 0 20px; }
.pill { height: 27px; padding: 0 12px; border: 0; border-radius: 13px; background: #e3e6ea; display: inline-flex; align-items: center; gap: 8px; margin-right: 3px; white-space: nowrap; }
.pill small { font: 9px "DejaVu Sans", sans-serif; margin-left: -3px; }
.pill .ic { width: 14px; height: 14px; }
.ring { width: 16px; height: 16px; border: 1px solid #444a55; border-radius: 50%; background: #fff; }
.msg { flex: 1; padding-left: 27px; color: var(--muted); }
.status .pill:last-child { margin-right: 0; }
```
